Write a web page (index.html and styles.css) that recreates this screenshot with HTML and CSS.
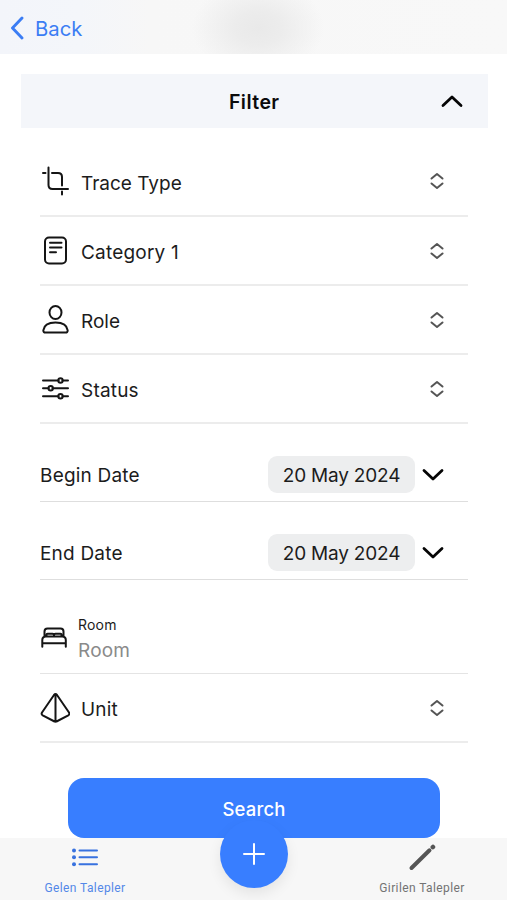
FILE: index.html
```html
<!DOCTYPE html>
<html lang="en">
<head>
<meta charset="utf-8">
<title>Filter</title>
<link rel="stylesheet" href="styles.css">
</head>
<body>
<svg class="defs" aria-hidden="true">
  <symbol id="updown" viewBox="0 0 16 18"><path d="M2.500 6.500 8 2l5.500 4.500M2.500 11.500 8 16l5.500-4.500"/></symbol>
  <symbol id="chev" viewBox="0 0 24 16"><path d="M3 3.500l9 8.500 9-8.500"/></symbol>
</svg>
<header class="nav">
  <svg class="back-icon" viewBox="0 0 14 24"><path d="M12 2 2.500 12 12 22"/></svg>
  <span class="back">Back</span>
</header>
<main class="content">
  <div class="filter">
    <span class="filter-title">Filter</span>
    <svg class="chev up"><use href="#chev"/></svg>
  </div>
  <div class="list">
    <div class="row first">
      <svg class="icon" viewBox="0 0 30 30"><path d="M8.500 1.500v17.500q0 4 4 4H28M3 7H5.500M12 7H18q4 0 4 4V19.500M22 25.500V28.500"/></svg>
      <span class="label">Trace Type</span><svg class="updown"><use href="#updown"/></svg>
    </div>
    <div class="row">
      <svg class="icon" viewBox="0 0 30 30"><rect x="5" y="1.500" width="21" height="26" rx="4"/><path d="M10 6.800h11.500M10 11.500h11.500M10 16.300h6"/></svg>
      <span class="label tight">Category 1</span><svg class="updown"><use href="#updown"/></svg>
    </div>
    <div class="row">
      <svg class="icon" viewBox="0 0 30 30"><ellipse cx="15.500" cy="7.500" rx="6" ry="6.500"/><path d="M5.500 27.500q-2.300 0-2.200-2.200C4 20 9 17.500 15.500 17.500S27 20 27.700 25.300q.1 2.200-2.200 2.200Z"/></svg>
      <span class="label">Role</span><svg class="updown"><use href="#updown"/></svg>
    </div>
    <div class="row">
      <svg class="icon" viewBox="0 0 30 30"><path d="M3 6.500h15.500M22.500 6.500H28M3 14.300h5.500M12.500 14.300H28M3 22.200h15.500M22.500 22.200H28"/><circle cx="20.500" cy="6.500" r="2.200"/><circle cx="10.700" cy="14.300" r="2.200"/><circle cx="20.500" cy="22.200" r="2.200"/></svg>
      <span class="label tight">Status</span><svg class="updown"><use href="#updown"/></svg>
    </div>
    <div class="row date">
      <span class="label tight">Begin Date</span><span class="pill">20 May 2024</span><svg class="chev"><use href="#chev"/></svg>
    </div>
    <div class="row date">
      <span class="label tight">End Date</span><span class="pill">20 May 2024</span><svg class="chev"><use href="#chev"/></svg>
    </div>
    <div class="row room">
      <svg class="icon bed" viewBox="0 0 30 30"><path d="M4.500 12.500V7.500q0-3 3-3H20.500q3 0 3 3V12.500M2.300 22.700V16q0-3.500 3.500-3.500H22.300q3.500 0 3.500 3.500V22.700M2.300 19.300H25.800M6.500 12V10.800q0-1 1-1h5q1.500 0 1.500 1.500 0-1.500 1.500-1.500h5q1 0 1 1V12"/></svg>
      <div class="field"><span class="caption">Room</span><span class="placeholder">Room</span></div>
    </div>
    <div class="row">
      <svg class="icon" viewBox="0 0 30 30"><path d="M14 2q1.500-1.800 3 0L29 19.500q1 1.800-.7 2.800L16.500 28.500q-1 .6-2 0L2.700 22.300Q1 21.300 2 19.500ZM15.500 1.500V28.500"/></svg>
      <span class="label tight">Unit</span><svg class="updown"><use href="#updown"/></svg>
    </div>
  </div>
  <button class="search">Search</button>
</main>
<footer class="tabs">
  <div class="tab active">
    <svg class="tab-icon" viewBox="0 0 28 28"><path d="M8.500 7.500H26M8.500 14.300H26M8.500 21.200H26"/><circle cx="3" cy="7.500" r="2"/><circle cx="3" cy="14.300" r="2"/><circle cx="3" cy="21.200" r="2"/></svg>
    <span>Gelen Talepler</span>
  </div>
  <div class="fab"><svg viewBox="0 0 24 24"><path d="M12 2v20M2 12h20"/></svg></div>
  <div class="tab right">
    <svg class="tab-icon pencil" viewBox="0 0 28 28"><path class="body" d="M3.500 25 21.500 7.300"/><path class="tip" d="M24.800 4.200l.2-.2"/></svg>
    <span>Girilen Talepler</span>
  </div>
</footer>
</body>
</html>
```
FILE: styles.css
```css
* { box-sizing: border-box; }
body {
  margin: 0;
  height: 900px;
  overflow: hidden;
  display: flex;
  flex-direction: column;
  background: #fff;
  color: #1c1c1c;
  font-family: Inter, "Liberation Sans", sans-serif;
  font-size: 19px;
}
svg { fill: none; stroke: currentColor; stroke-linecap: round; stroke-linejoin: round; flex: none; }
.defs { position: absolute; width: 0; height: 0; }
.nav {
  height: 54px;
  flex: none;
  display: flex;
  align-items: center;
  padding: 2px 0 0 10px;
  color: #3b7df4;
  background:
    radial-gradient(ellipse 66px 48px at 258px 28px, #e9e9e9 0, #ececec 35%, rgba(247, 247, 247, 0) 100%),
    linear-gradient(90deg, #f3f5fa 0, #f4f6fa 80px, #f7f7f7 150px, #f8f8f8 100%);
}
.back-icon { width: 14px; height: 24px; stroke-width: 2.9; margin-right: 11px; }
.back { font-size: 20.300px; }
.content { height: 784px; flex: none; padding: 20px 19px 0 20.500px; }
.filter {
  height: 54px;
  background: #f4f6fa;
  color: #0b0b0c;
  display: grid;
  grid-template-columns: 1fr auto 1fr;
  align-items: center;
}
.filter-title { grid-column: 2; font-weight: 600; font-size: 19.500px; letter-spacing: .45px; padding-top: 2px; }
.chev { width: 24px; height: 16px; color: #050505; stroke-width: 2.8; }
.chev.up { transform: rotate(180deg); justify-self: end; margin-right: 24px; }
.list { padding: 19px 0 0; margin: 0 1px 0 19.500px; width: 428px; }
.row {
  height: 69px;
  display: flex;
  align-items: center;
  border-bottom: 2px solid #ececec;
  padding-right: 23px;
}
.row.first { height: 70px; }
.icon { width: 30px; height: 30px; margin-right: 11px; stroke-width: 2; color: #151515; }
.label { flex: 1; padding-top: 4px; }
.tight { letter-spacing: .2px; }
.updown { width: 16px; height: 18px; stroke-width: 2; color: #555; }
.date { height: 78px; border-width: 1px; border-color: #dedede; padding: 24px 23px 0 0; }
.date .label { padding-top: 1px; }
.pill {
  width: 147px;
  height: 37px;
  border-radius: 9px;
  background: #edeeef;
  display: flex;
  align-items: center;
  justify-content: center;
  margin-right: 6px;
  padding-top: 1px;
  letter-spacing: -.2px;
}
.room { height: 94px; border-width: 1px; border-color: #e4e4e4; padding-top: 24px; }
.bed { margin-right: 8px; }
.field { display: flex; flex-direction: column; padding-top: 5px; letter-spacing: .2px; }
.caption { font-size: 14px; line-height: 20px; }
.placeholder { color: #8a8a8a; line-height: 32px; }
.search {
  display: block;
  width: 372px;
  height: 60px;
  margin: 35px 0 0 47.500px;
  border: 0;
  border-radius: 16px;
  background: #387eff;
  color: #fff;
  font: 500 18.500px Inter, sans-serif;
  letter-spacing: .15px;
  padding: 2px 0 0;
}
.tabs {
  height: 62px;
  display: flex;
  justify-content: space-between;
  background: #f7f7f7;
  font: 12px Roboto, sans-serif;
  letter-spacing: .4px;
}
.tab { width: 170px; display: flex; flex-direction: column; align-items: center; color: #5488e8; padding-top: 5px; }
.tab.right { color: #737373; }
.tab span { margin-top: 10px; white-space: nowrap; }
.tab-icon { width: 28px; height: 28px; stroke-width: 2; color: #3872df; }
.tab-icon circle { fill: currentColor; stroke: none; }
.pencil { color: #555; }
.pencil .body { stroke-width: 4; }
.pencil .tip { stroke-width: 4.5; }
.fab {
  width: 68px;
  height: 68px;
  flex: none;
  margin-top: -18px;
  border-radius: 50%;
  background: #387eff;
  color: #fff;
  display: flex;
  align-items: center;
  justify-content: center;
  box-shadow: 0 6px 14px rgba(0, 0, 0, .08);
  clip-path: inset(0 -30px -30px -30px);
}
.fab svg { width: 24px; height: 24px; stroke-width: 2; }
```
